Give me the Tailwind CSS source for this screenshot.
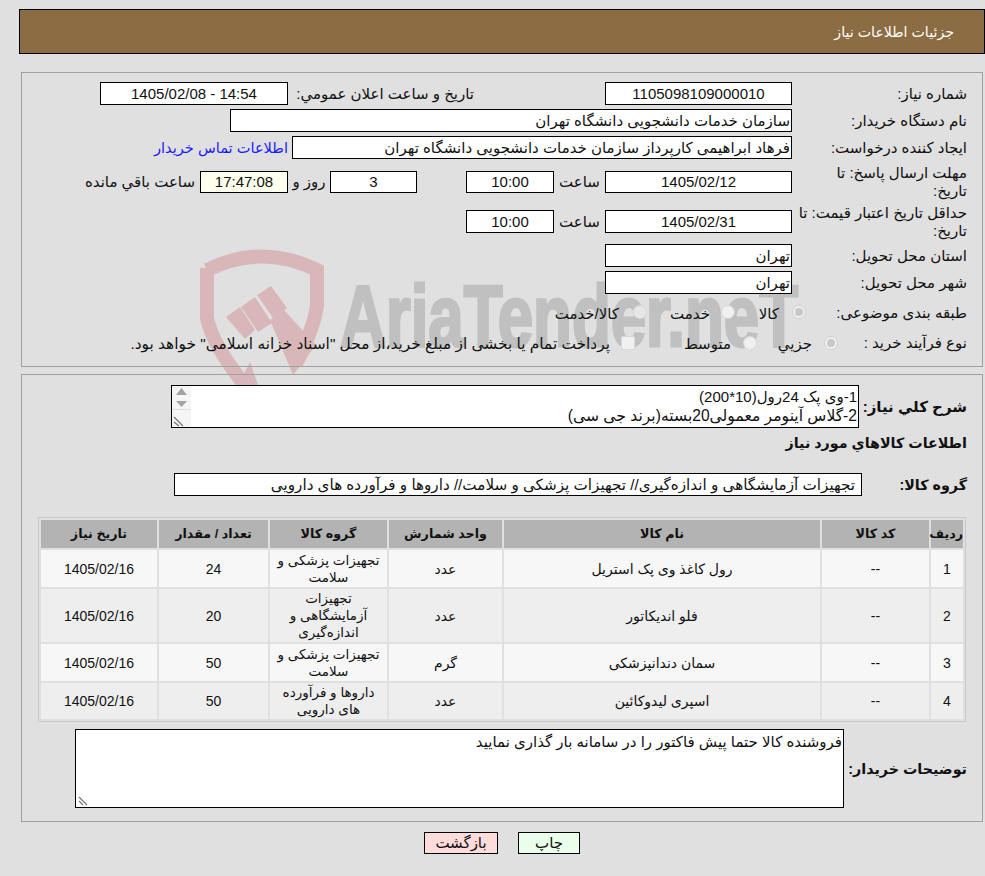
<!DOCTYPE html>
<html lang="fa" dir="rtl">
<head>
<meta charset="utf-8">
<script src="https://cdn.jsdelivr.net/npm/@tailwindcss/browser@4"></script>
<title>جزئيات اطلاعات نياز</title>
</head>
<body class="bg-[#e0e0e0] text-[#111] text-[15px] leading-[18px] [font-family:'Liberation_Sans','DejaVu_Sans',sans-serif]">
<div class="relative w-[985px] h-[876px] overflow-hidden pt-[9px]">
  <svg class="absolute left-0 top-0 [direction:ltr]" width="985" height="876" viewBox="0 0 985 876" aria-hidden="true">
    <g fill="none" stroke="#d9b7b8" stroke-width="14">
      <path d="M207 270 Q262 243 317 270 L317 305 Q315 325 296 364"/>
      <path d="M207 268 L207 318 Q212 345 250 392"/>
    </g>
    <g fill="#d9b7b8">
      <polygon points="226,317 240,307 255,330 245,339"/>
      <polygon points="241,307 255,297 272,323 258,332"/>
      <polygon points="257,295 271,286 287,308 273,318"/>
      <polygon points="270,320 284,310 316,345 293,375"/>
      <polygon points="250,362 258,385 238,385"/>
    </g>
    <text x="340" y="346" font-family="'Liberation Sans Narrow','Liberation Sans',sans-serif" font-weight="700" font-size="88" fill="#c0c0c0" stroke="#c0c0c0" stroke-width="3" textLength="458" lengthAdjust="spacingAndGlyphs" class="[direction:ltr]">AriaTender.neT</text>
  </svg>

  <div class="relative">
    <div class="h-[45px] w-[966px] bg-[#8c6c42] border border-black flex items-center pr-[30px] text-white text-[14.2px]">جزئيات اطلاعات نياز</div>

    <section class="mt-[18px] mr-[2px] w-[962px] h-[295px] border border-[#a0a0a0] pt-[9px] pr-[15px]">
      <div class="flex items-center h-[23px]">
        <div class="w-[175px] shrink-0">شماره نياز:</div>
        <div class="w-[187px] h-[23px] shrink-0 bg-white border border-black flex items-center justify-center">1105098109000010</div>
        <div class="w-[317px] shrink-0 pr-[131px] whitespace-nowrap">تاريخ و ساعت اعلان عمومي:</div>
        <div class="w-[188px] h-[23px] shrink-0 bg-white border border-black flex items-center justify-center" dir="ltr">1405/02/08 - 14:54</div>
      </div>
      <div class="flex items-center h-[23px] mt-[4px]">
        <div class="w-[175px] shrink-0">نام دستگاه خريدار:</div>
        <div class="w-[562px] h-[23px] shrink-0 bg-white border border-black flex items-center px-[1px]">سازمان خدمات دانشجویی دانشگاه تهران</div>
      </div>
      <div class="flex items-center h-[23px] mt-[4px]">
        <div class="w-[175px] shrink-0">ايجاد كننده درخواست:</div>
        <div class="w-[500px] h-[23px] shrink-0 bg-white border border-black flex items-center px-[1px]">فرهاد ابراهیمی کارپرداز سازمان خدمات دانشجویی دانشگاه تهران</div>
        <a class="mr-[4px] text-[#1a1aff] whitespace-nowrap text-[14.6px]" href="#">اطلاعات تماس خريدار</a>
      </div>
      <div class="flex items-center h-[33px] mt-[6px]">
        <div class="w-[175px] shrink-0">مهلت ارسال پاسخ: تا<br>تاريخ:</div>
        <div class="w-[187px] h-[22px] shrink-0 bg-white border border-black flex items-center justify-center">1405/02/12</div>
        <div class="w-[51px] shrink-0 text-center">ساعت</div>
        <div class="w-[88px] h-[22px] shrink-0 bg-white border border-black flex items-center justify-center">10:00</div>
        <div class="w-[49px] shrink-0"></div>
        <div class="w-[87px] h-[22px] shrink-0 bg-white border border-black flex items-center justify-center">3</div>
        <div class="w-[42px] shrink-0 text-center">روز و</div>
        <div class="w-[88px] h-[22px] shrink-0 bg-[#ffffee] border border-black flex items-center justify-center">17:47:08</div>
        <div class="mr-[5px] whitespace-nowrap">ساعت باقي مانده</div>
      </div>
      <div class="flex items-center h-[33px] mt-[7px]">
        <div class="w-[175px] shrink-0">حداقل تاريخ اعتبار قيمت: تا<br>تاريخ:</div>
        <div class="w-[187px] h-[23px] shrink-0 bg-white border border-black flex items-center justify-center">1405/02/31</div>
        <div class="w-[51px] shrink-0 text-center">ساعت</div>
        <div class="w-[88px] h-[23px] shrink-0 bg-white border border-black flex items-center justify-center">10:00</div>
      </div>
      <div class="flex items-center h-[23px] mt-[6px]">
        <div class="w-[175px] shrink-0">استان محل تحويل:</div>
        <div class="w-[187px] h-[23px] shrink-0 bg-white border border-black flex items-center px-[1px]">تهران</div>
      </div>
      <div class="flex items-center h-[23px] mt-[4px]">
        <div class="w-[175px] shrink-0">شهر محل تحويل:</div>
        <div class="w-[187px] h-[23px] shrink-0 bg-white border border-black flex items-center px-[1px]">تهران</div>
      </div>
      <div class="flex items-center h-[26px] mt-[6px]">
        <div class="w-[161px] shrink-0">طبقه بندی موضوعی:</div>
        <span class="w-[14px] h-[14px] shrink-0 rounded-full bg-[#f0f0f0] border border-[#d0d0d0] flex items-center justify-center mb-[2px]"><span class="w-[8px] h-[8px] rounded-full bg-[#c8c8c8]"></span></span>
        <span class="mr-[13px] w-[44px] shrink-0 pt-[2px]">کالا</span>
        <span class="w-[14px] h-[14px] shrink-0 rounded-full bg-[#f0f0f0] border border-[#d8d8d8] mb-[2px]"></span>
        <span class="mr-[11px] w-[63px] shrink-0 pt-[2px]">خدمت</span>
        <span class="w-[14px] h-[14px] shrink-0 rounded-full bg-[#e6e6e6] border border-[#d8d8d8] mb-[2px]"></span>
        <span class="mr-[14px] whitespace-nowrap pt-[2px]">کالا/خدمت</span>
      </div>
      <div class="flex items-center h-[26px] mt-[4px]">
        <div class="w-[129px] shrink-0">نوع فرآيند خريد :</div>
        <span class="w-[14px] h-[14px] shrink-0 rounded-full bg-[#f0f0f0] border border-[#d0d0d0] flex items-center justify-center"><span class="w-[8px] h-[8px] rounded-full bg-[#c8c8c8]"></span></span>
        <span class="mr-[12px] w-[55px] shrink-0 pt-[2px]">جزيي</span>
        <span class="w-[14px] h-[14px] shrink-0 rounded-full bg-[#f0f0f0] border border-[#d8d8d8]"></span>
        <span class="mr-[12px] w-[96px] shrink-0 pt-[2px]">متوسط</span>
        <span class="w-[14px] h-[14px] shrink-0 rounded-[2px] bg-[#f0f0f0] border border-[#d8d8d8]"></span>
        <span class="mr-[11px] whitespace-nowrap text-[15.4px] pt-[1px]">پرداخت تمام يا بخشی از مبلغ خريد،از محل "اسناد خزانه اسلامی" خواهد بود.</span>
      </div>
    </section>

    <section class="mt-[7px] mr-[2px] w-[962px] h-[448px] border border-[#a0a0a0] pt-[10px] pr-[15px]">
      <div class="flex items-center">
        <div class="w-[108px] shrink-0 font-bold">شرح كلي نياز:</div>
        <div class="relative w-[688px] h-[43px] bg-white border border-black px-[1px] pt-[2px] overflow-hidden">
          <div class="h-[19px]">1-وی پک 24رول(10*200)</div>
          <div class="text-[15.6px]">2-گلاس آینومر معمولی20بسته(برند جی سی)</div>
          <svg class="absolute left-0 top-0" width="20" height="42" viewBox="0 0 20 42" aria-hidden="true">
            <rect width="19" height="42" fill="#f5f5f5"/>
            <rect y="23" width="19" height="1" fill="#dcdcdc"/>
            <polygon points="9.5,2 15,9 4,9" fill="#a3a3a3"/>
            <polygon points="4,15 15,15 9.5,21" fill="#a3a3a3"/>
            <path d="M2 31l9 9M2 36l5 4" stroke="#777" stroke-width="1.3" fill="none"/>
          </svg>
        </div>
      </div>
      <div class="font-bold text-[14.3px] mt-[6px] h-[18px]">اطلاعات كالاهاي مورد نياز</div>
      <div class="flex items-center mt-[21px]">
        <div class="w-[105px] shrink-0 font-bold text-[14.3px]">گروه کالا:</div>
        <div class="w-[688px] h-[23px] bg-white border border-black flex items-center pr-[6px] whitespace-nowrap text-[15.2px]">تجهیزات آزمایشگاهی و اندازه‌گیری// تجهیزات پزشکی و سلامت// داروها و فرآورده های دارویی</div>
      </div>
      <table class="mt-[21px] mr-[1px] w-[928px] h-[205px] table-fixed border-separate border-spacing-[2px] border border-[#c8c8c8] text-center text-[14px] leading-[17px]">
        <colgroup><col class="w-[32px]"><col class="w-[107px]"><col class="w-[316px]"><col class="w-[113px]"><col class="w-[117px]"><col class="w-[109px]"><col class="w-[116px]"></colgroup>
        <thead>
          <tr class="h-[28px] bg-[#b3b3b3] text-[12.7px]">
            <th class="p-0 font-bold">ردیف</th><th class="p-0 font-bold">کد کالا</th><th class="p-0 font-bold">نام کالا</th><th class="p-0 font-bold">واحد شمارش</th><th class="p-0 font-bold">گروه کالا</th><th class="p-0 font-bold">تعداد / مقدار</th><th class="p-0 font-bold">تاریخ نیاز</th>
          </tr>
        </thead>
        <tbody>
          <tr class="h-[37px] bg-[#f7f7f7]">
            <td class="p-0 pt-[1px]">1</td><td class="p-0 pt-[1px]">--</td><td class="p-0 pt-[1px]">رول کاغذ وی پک استریل</td><td class="p-0 pt-[1px]">عدد</td><td class="px-[4px] py-0 text-[13.5px]">تجهیزات پزشکی و سلامت</td><td class="p-0 pt-[1px]">24</td><td class="p-0 pt-[1px]">1405/02/16</td>
          </tr>
          <tr class="h-[53px] bg-[#eeeeee]">
            <td class="p-0 pt-[1px]">2</td><td class="p-0 pt-[1px]">--</td><td class="p-0 pt-[1px]">فلو اندیکاتور</td><td class="p-0 pt-[1px]">عدد</td><td class="px-[4px] py-0 text-[13.5px]">تجهیزات آزمایشگاهی و اندازه‌گیری</td><td class="p-0 pt-[1px]">20</td><td class="p-0 pt-[1px]">1405/02/16</td>
          </tr>
          <tr class="h-[37px] bg-[#f7f7f7]">
            <td class="p-0 pt-[1px]">3</td><td class="p-0 pt-[1px]">--</td><td class="p-0 pt-[1px]">سمان دندانپزشکی</td><td class="p-0 pt-[1px]">گرم</td><td class="px-[4px] py-0 text-[13.5px]">تجهیزات پزشکی و سلامت</td><td class="p-0 pt-[1px]">50</td><td class="p-0 pt-[1px]">1405/02/16</td>
          </tr>
          <tr class="h-[36px] bg-[#eeeeee]">
            <td class="p-0 pt-[1px]">4</td><td class="p-0 pt-[1px]">--</td><td class="p-0 pt-[1px]">اسپری لیدوکائین</td><td class="p-0 pt-[1px]">عدد</td><td class="px-[4px] py-0 text-[13.5px]">داروها و فرآورده های دارویی</td><td class="p-0 pt-[1px]">50</td><td class="p-0 pt-[1px]">1405/02/16</td>
          </tr>
        </tbody>
      </table>
      <div class="flex items-center mt-[7px]">
        <div class="w-[123px] shrink-0 font-bold text-[14.3px] whitespace-nowrap">توضیحات خریدار:</div>
        <div class="relative w-[769px] h-[79px] bg-white border border-black px-[1px] pt-[3px]">
          فروشنده کالا حتما پیش فاکتور را در سامانه بار گذاری نمایید
          <svg class="absolute left-[1px] bottom-[1px]" width="12" height="12" viewBox="0 0 12 12" aria-hidden="true"><path d="M2 3l8 8M2 7l4 4" stroke="#777" stroke-width="1.2" fill="none"/></svg>
        </div>
      </div>
    </section>

    <div class="flex mt-[10px] mr-[405px] gap-[20px]">
      <button class="w-[62px] h-[22px] bg-[#eaffea] border border-black">چاپ</button>
      <button class="w-[74px] h-[22px] bg-[#ffdcdc] border border-black">بازگشت</button>
    </div>
  </div>
</div>
</body>
</html>
